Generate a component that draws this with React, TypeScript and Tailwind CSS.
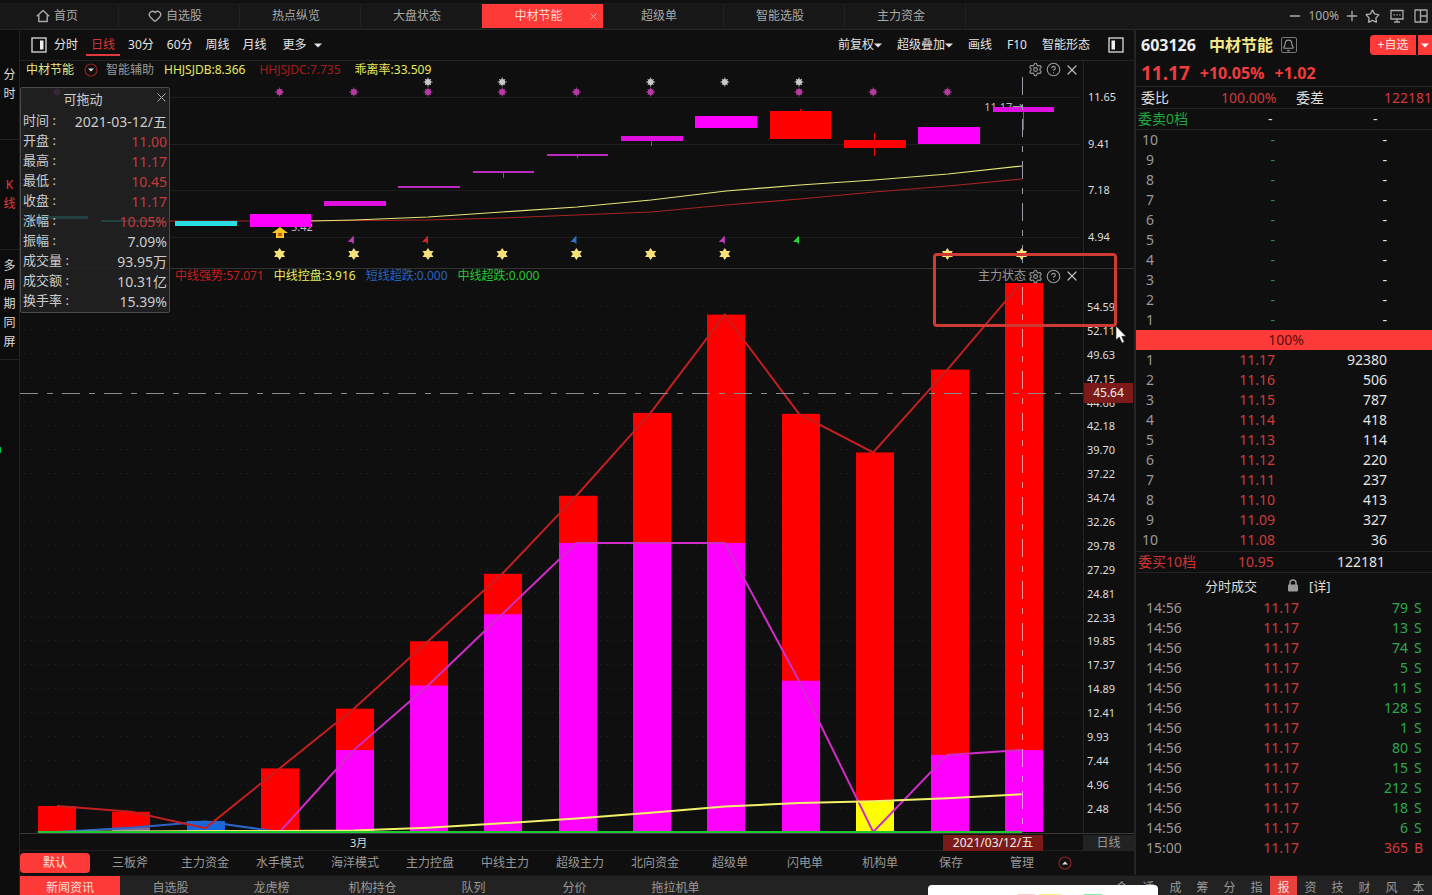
import { Fragment } from 'react'
import type { ReactNode } from 'react'
import { Bell, Heart, HelpCircle, Minus, Plus, Settings, Star, X } from 'lucide-react'
import clsx from 'clsx'

const RED = '#ff0000'
const MAGENTA = '#ff00ff'

const STEP = 74.2
const lineX = (i: number) => 37 + i * STEP
const barX = (i: number) => Math.round(18 + i * 74.38)
const ZERO = 549
const valueY = (v: number) => ZERO - v * 9.634

const strong = [2.7, 2.1, 0.4, 6.6, 12.8, 19.8, 26.8, 34.9, 43.5, 53.7, 43.4, 39.4, 48, 57.07]
const main = [0, 0, 0, 0, 8.5, 15.2, 22.6, 30, 30, 30, 15.7, 0, 8, 8.5]
const control = [0, 0.05, 0.1, 0.1, 0.15, 0.45, 0.9, 1.4, 2, 2.65, 3, 3.2, 3.5, 3.92]
const oversold = [0, 0.45, 1.1, 0]

const axisLabels = [
  '54.59', '52.11', '49.63', '47.15', '44.66', '42.18', '39.70', '37.22', '34.74', '32.26', '29.78',
  '27.29', '24.81', '22.33', '19.85', '17.37', '14.89', '12.41', '9.93', '7.44', '4.96', '2.48',
]

const candles = [
  { x: 20, y: 138, w: 48, h: 3, color: '#2adfe4' },
  { x: 81, y: 142, w: 62, h: 2, color: '#2adfe4' },
  { x: 155, y: 143, w: 62, h: 5, color: '#2adfe4' },
  { x: 230, y: 136, w: 61, h: 13, color: MAGENTA },
  { x: 304, y: 123, w: 62, h: 5, color: '#e010e0' },
  { x: 378, y: 108, w: 62, h: 2, color: '#c02ac0' },
  { x: 453, y: 93, w: 61, h: 2, color: '#c02ac0', wick: [93, 100] },
  { x: 527, y: 76, w: 61, h: 2, color: '#c02ac0', wick: [76, 80] },
  { x: 601, y: 58, w: 62, h: 5, color: '#e010e0', wick: [58, 68] },
  { x: 675, y: 38, w: 62, h: 12, color: MAGENTA },
  { x: 750, y: 33, w: 61, h: 28, color: RED, wick: [31, 61] },
  { x: 824, y: 62, w: 62, h: 8, color: RED, wick: [55, 78] },
  { x: 898, y: 49, w: 62, h: 17, color: MAGENTA },
  { x: 973, y: 29, w: 61, h: 5, color: '#e010e0', wick: [29, 52] },
]

const whiteDots = [5, 6, 8, 9, 10]
const pinkDots = [0, 3, 4, 5, 6, 7, 8, 10, 11, 12]
const goldStars = [3, 4, 5, 6, 7, 8, 9, 12, 13]
const flags = [
  { i: 4, color: '#c23cc2' },
  { i: 5, color: '#d62222' },
  { i: 7, color: '#2f6fd0' },
  { i: 9, color: '#c23cc2' },
  { i: 10, color: '#22d43a' },
]

const quoteRows = [
  { label: '时间', value: '2021-03-12/五' },
  { label: '开盘', value: '11.00', up: true },
  { label: '最高', value: '11.17', up: true },
  { label: '最低', value: '10.45', up: true },
  { label: '收盘', value: '11.17', up: true },
  { label: '涨幅', value: '10.05%', up: true },
  { label: '振幅', value: '7.09%' },
  { label: '成交量', value: '93.95万' },
  { label: '成交额', value: '10.31亿' },
  { label: '换手率', value: '15.39%' },
]

const bids = [
  ['1', '11.17', '92380'],
  ['2', '11.16', '506'],
  ['3', '11.15', '787'],
  ['4', '11.14', '418'],
  ['5', '11.13', '114'],
  ['6', '11.12', '220'],
  ['7', '11.11', '237'],
  ['8', '11.10', '413'],
  ['9', '11.09', '327'],
  ['10', '11.08', '36'],
]
const asks = ['10', '9', '8', '7', '6', '5', '4', '3', '2', '1'].map((n) => [n, '-', '-'])

const ticks = ['79', '13', '74', '5', '11', '128', '1', '80', '15', '212', '18', '6']
  .map((volume) => ({ time: '14:56', volume, side: 'S' }))
  .concat({ time: '15:00', volume: '365', side: 'B' })

const points = (values: number[], start = 0) =>
  values.slice(start).map((v, i) => `${lineX(i + start)},${valueY(v)}`).join(' ')

const Caret = () => (
  <svg width="8" height="5" viewBox="0 0 8 5" className="inline-block">
    <path d="M0 0.5h8L4 4.5z" fill="currentColor" />
  </svg>
)

const CircleCaret = ({ up = false }: { up?: boolean }) => (
  <svg width="14" height="14" viewBox="0 0 14 14" className="shrink-0">
    <circle cx="7" cy="7" r="6" fill="none" stroke="#8e2222" strokeWidth="1.2" />
    <path d={up ? 'M4 8.5h6L7 5.5z' : 'M4 5.5h6L7 8.5z'} fill="#ddd" />
  </svg>
)

const PanelIcon = ({ side }: { side: 'left' | 'right' }) => (
  <svg width="16" height="16" viewBox="0 0 16 16">
    <rect x="1" y="1" width="14" height="14" fill="none" stroke="#ddd" strokeWidth="1.3" />
    <rect x={side === 'right' ? 9 : 3.5} y="3.5" width="3.5" height="9" fill="#eee" />
  </svg>
)

const HomeIcon = () => (
  <svg width="14" height="14" viewBox="0 0 14 14" fill="none" stroke="currentColor" strokeWidth="1.4">
    <path d="M0.800 7.200L7 1.500l6.200 5.700M2.800 6v6.500h8.400V6" strokeLinejoin="round" />
  </svg>
)

const MessageIcon = () => (
  <svg width="14" height="14" viewBox="0 0 14 14" fill="none" stroke="currentColor" strokeWidth="1.3">
    <path d="M1 1.500h12v8.500H1zM7 10v3M4 13h6" />
    <path d="M3.500 5.800h1.400M6.300 5.800h1.400M9.100 5.800h1.400" />
  </svg>
)

const LayoutIcon = () => (
  <svg width="14" height="14" viewBox="0 0 14 14" fill="none" stroke="currentColor" strokeWidth="1.3">
    <path d="M1 1h12v12H1zM6.500 1v12M6.500 7H13" />
  </svg>
)

const LockIcon = () => (
  <svg width="12" height="13" viewBox="0 0 12 13" className="mr-[10px] ml-[30px] shrink-0">
    <path d="M3 6V4a3 3 0 0 1 6 0v2" fill="none" stroke="#999" strokeWidth="1.5" />
    <rect x="1" y="5.500" width="10" height="7" rx="1" fill="#999" />
  </svg>
)

function TopTabs() {
  const tabs: { name: string; icon?: ReactNode }[] = [
    { name: '自选股', icon: <Heart size={14} strokeWidth={2.4} /> },
    { name: '热点纵览' },
    { name: '大盘状态' },
    { name: '中材节能' },
    { name: '超级单' },
    { name: '智能选股' },
    { name: '主力资金' },
  ]
  return (
    <nav className="flex h-[30px] shrink-0 items-center border-t-3 border-b border-t-[#101010] border-b-[#262626] bg-[#171717] text-[12px] text-[#a9a9a9]">
      <button className="flex h-6 w-[119px] items-center justify-center gap-1 border-r border-[#202020] pr-1">
        <HomeIcon />
        首页
      </button>
      {tabs.map((tab) =>
        tab.name === '中材节能' ? (
          <div key={tab.name} className="relative flex h-6 w-[121px] items-center">
            <button className="h-6 w-full bg-[#fd3a37] pr-2 text-[#ffd9d6]">{tab.name}</button>
            <button aria-label="关闭" className="absolute right-1 text-[#ffb9b5]">
              <X size={11} />
            </button>
          </div>
        ) : (
          <button
            key={tab.name}
            className="flex h-6 w-[121px] items-center justify-center gap-1 border-r border-[#202020] pr-2"
          >
            {tab.icon}
            {tab.name}
          </button>
        ),
      )}
      <div className="ml-auto flex items-center gap-[5px] pr-1">
        <button aria-label="缩小"><Minus size={16} /></button>
        <span>100%</span>
        <button aria-label="放大"><Plus size={16} /></button>
        <button aria-label="收藏"><Star size={15} strokeWidth={2.2} /></button>
        <button aria-label="消息" className="ml-[5px]"><MessageIcon /></button>
        <button aria-label="布局" className="ml-[5px]"><LayoutIcon /></button>
      </div>
    </nav>
  )
}

function Sidebar() {
  const groups = ['分时', 'K线', '多周期同屏']
  return (
    <aside className="relative w-5 shrink-0 border-r border-[#242424] bg-[#0c0c0c] text-[12px] leading-[19px]">
      {groups.map((group) => (
        <button
          key={group}
          className={clsx(
            'flex h-[110px] w-full flex-col items-center justify-center border-b border-[#222] pb-0.5',
            group === 'K线' ? 'text-[#e23b3b]' : 'text-[#ddd]',
          )}
        >
          {group.split('').map((c) => (
            <span key={c}>{c}</span>
          ))}
        </button>
      ))}
      <span className="absolute top-[417px] left-0 h-1.5 w-px bg-green-500" />
    </aside>
  )
}

function Toolbar() {
  return (
    <div className="flex h-[30px] shrink-0 items-center pr-[10px] pl-[11px] text-[12px] text-[#e4e4e4]">
      <button aria-label="左侧栏"><PanelIcon side="right" /></button>
      <div className="ml-[7px] flex items-center gap-[13px]">
        <button>分时</button>
        <button className="-mx-[5px] mt-0.5 border-b-2 border-[#e03a3a] px-[5px] text-[#d93636]">日线</button>
        <button>30分</button>
        <button>60分</button>
        <button>周线</button>
        <button>月线</button>
        <button className="ml-[3px] flex items-center gap-[7px]">更多 <Caret /></button>
      </div>
      <div className="ml-auto flex items-center gap-[15px]">
        <button className="flex items-center">前复权<Caret /></button>
        <button className="flex items-center">超级叠加<Caret /></button>
        <button>画线</button>
        <button>F10</button>
        <button>智能形态</button>
        <button aria-label="右侧栏" className="ml-[3px]"><PanelIcon side="left" /></button>
      </div>
    </div>
  )
}

const HeaderIcons = () => (
  <div className="flex items-center gap-[3px] text-[#999]">
    <button aria-label="设置"><Settings size={15} strokeWidth={1.8} /></button>
    <button aria-label="帮助"><HelpCircle size={15} strokeWidth={1.8} /></button>
    <button aria-label="关闭" className="text-[#bbb]"><X size={16} strokeWidth={1.8} /></button>
  </div>
)

const Dot = ({ x, y, color }: { x: number; y: number; color: string }) => (
  <g transform={`translate(${x} ${y})`} stroke={color}>
    <circle r="2.6" fill={color} />
    <path d="M0-4.500V4.500M-4.500 0H4.500M-3-3L3 3M-3 3L3-3" strokeWidth="0.9" />
  </g>
)

function KLinePanel() {
  return (
    <section className="flex h-[208px] shrink-0 border-t border-[#242424]">
      <div className="flex min-w-0 flex-1 flex-col">
        <div className="flex h-[17px] shrink-0 items-center pr-[3px] pl-1.5 text-[12px] leading-[17px] whitespace-nowrap">
          <span className="text-[#e6e68a]">中材节能</span>
          <button aria-label="切换" className="mr-2 ml-[10px]"><CircleCaret /></button>
          <span className="text-[#999]">智能辅助</span>
          <span className="ml-[10px] text-[#e8ea62]">HHJSJDB:8.366</span>
          <span className="ml-[14px] text-[#a81c1c]">HHJSJDC:7.735</span>
          <span className="ml-[14px] text-[#e8ea62]">乖离率:33.509</span>
          <div className="ml-auto"><HeaderIcons /></div>
        </div>
        <div className="relative min-h-0 flex-1 text-[11px] leading-4 text-[#bbb]">
          <span className="absolute top-[11%] left-[90.7%]">11.17→</span>
          <span className="absolute top-[74%] left-[25.5%]">5.42</span>
          <svg
            viewBox="0 0 1063 190"
            preserveAspectRatio="none"
            className="relative block h-full w-full overflow-visible"
          >
            {[19, 66, 112, 159].map((y) => (
              <line key={y} x1="0" x2="1060" y1={y + 0.5} y2={y + 0.5} stroke="#1e1e1e" />
            ))}
            <polyline
              points="81,143 260,143 408,142 482,140 557,137 631,134 706,127 780,121 854,114 928,108 1002,101"
              fill="none"
              stroke="#a82222"
              strokeWidth="1.2"
            />
            <polyline
              points="290,143 334,142 408,139 482,134 557,129 631,122 706,113 780,107 854,102 928,96 1002,88"
              fill="none"
              stroke="#e6e67a"
              strokeWidth="1.2"
            />
            {candles.map((c) => (
              <g key={c.x} fill={c.color}>
                <rect x={c.x} y={c.y} width={c.w} height={c.h} />
                {c.wick && <rect x={c.x + 30} y={c.wick[0]} width="1" height={c.wick[1] - c.wick[0]} />}
              </g>
            ))}
            {whiteDots.map((i) => <Dot key={i} x={lineX(i)} y={4} color="#c8c8c8" />)}
            {pinkDots.map((i) => <Dot key={i} x={lineX(i)} y={14} color="#b83aa4" />)}
            {flags.map(({ i, color }) => (
              <path key={i} d={`M${lineX(i)} 157.500v9l-2-2.500h-4z`} fill={color} />
            ))}
            <path d="M260 149l8 6h-4v5h-8v-5h-4z" fill="#f7c624" />
            <path d="M258 155h4v3h-4z" fill="#cf5a14" />
            <line x1="1002.5" x2="1002.5" y1="-1" y2="190" stroke="#9a9aa6" strokeDasharray="18 9 6 9" />
            {goldStars.map((i) => (
              <path
                key={i}
                transform={`translate(${lineX(i)} 176)`}
                d="M0-6L2-3H5.500L3.600 0L5.500 3H2L0 6L-2 3H-5.500L-3.600 0L-5.500-3H-2Z"
                fill="#f6e07a"
              />
            ))}
          </svg>
        </div>
      </div>
      <div className="flex w-[51px] shrink-0 flex-col justify-between border-l border-[#242424] pt-7 pb-[23px] pl-1 text-[11px] leading-4 text-[#ddd]">
        {['11.65', '9.41', '7.18', '4.94'].map((v) => <span key={v}>{v}</span>)}
      </div>
    </section>
  )
}

function MainForcePanel() {
  return (
    <section className="relative flex min-h-0 flex-1 border-t border-[#333]">
      <div className="flex min-w-0 flex-1 flex-col">
        <div className="flex h-[14px] shrink-0 items-center gap-[10px] pr-[3px] pl-[155px] text-[12px] leading-[14px] whitespace-nowrap">
          <span className="text-[#c81e1e]">中线强势:57.071</span>
          <span className="text-[#e8ea62]">中线控盘:3.916</span>
          <span className="text-[#2b64c0]">短线超跌:0.000</span>
          <span className="text-[#28c832]">中线超跌:0.000</span>
          <div className="z-10 ml-auto flex items-center gap-0.5">
            <span className="text-[#999]">主力状态</span>
            <HeaderIcons />
          </div>
        </div>
        <svg viewBox="0 0 1063 550" preserveAspectRatio="none" className="block min-h-0 w-full flex-1">
          {axisLabels.map((v) => (
            <line
              key={v}
              x1="4"
              x2="1060"
              y1={valueY(Number(v))}
              y2={valueY(Number(v))}
              stroke="#1d1d1d"
              strokeDasharray="2 4"
            />
          ))}
          {strong.map((v, i) => (
            <Fragment key={i}>
              {i !== 2 && <rect x={barX(i)} y={valueY(v)} width="38" height={ZERO - valueY(v)} fill={RED} />}
              <rect x={barX(i)} y={valueY(main[i])} width="38" height={ZERO - valueY(main[i])} fill={MAGENTA} />
            </Fragment>
          ))}
          <rect x={barX(1)} y={valueY(0.45)} width="38" height="4" fill="#7a6a9a" />
          <rect x={barX(2)} y={valueY(1.15)} width="38" height="11" fill="#1467e0" />
          <rect x={barX(11)} y={valueY(3.2)} width="38" height="31" fill="#ffff00" />
          <g fill="none" strokeWidth="2">
            <polyline points={points(oversold)} stroke="#2a66c8" />
            <polyline points={points(strong)} stroke="#c41f1f" />
            <polyline points={points(main, 3)} stroke="#d02cc8" />
            <polyline points={points(control)} stroke="#f2f26a" />
          </g>
          <line x1="18" x2="1002" y1={ZERO} y2={ZERO} stroke="#22c832" strokeWidth="2" />
          <line x1="0" x2="1063" y1="110.5" y2="110.5" stroke="#8a8a92" strokeDasharray="18 9 6 9" />
          <line x1="1002.5" x2="1002.5" y1="4" y2="550" stroke="#fff" strokeOpacity="0.6" strokeDasharray="18 9 6 9" />
        </svg>
      </div>
      <div className="relative flex w-[51px] shrink-0 flex-col justify-between border-l border-[#242424] pt-[30px] pb-4 pl-[3px] text-[11px] leading-4 text-[#ddd]">
        {axisLabels.map((v) => <span key={v}>{v}</span>)}
        <span className="absolute top-[114px] left-0 h-5 w-[49px] bg-[#7c1a1a] text-center text-[12px] leading-5 text-[#eee]">
          45.64
        </span>
      </div>
      <div className="absolute -top-4 right-[17px] z-20 h-[74px] w-[184px] rounded border-3 border-[#cf3a33]" />
      <svg width="12" height="19" viewBox="0 0 12 19" className="absolute top-14 right-[7px] z-20">
        <path d="M1 1v14l3.200-3L7 18l2.300-1L6.700 11.300H11z" fill="#fff" stroke="#222" strokeWidth="0.6" />
      </svg>
    </section>
  )
}

function DateAxis() {
  return (
    <div className="flex h-[18px] shrink-0 items-center border-t border-b border-t-[#3a3a3a] border-b-[#202020] pt-0.5 pl-[330px] text-[12px] leading-4">
      <span className="text-[11px] text-[#ddd]">3月</span>
      <span className="mr-10 ml-auto w-[100px] bg-[#7c1a1a] text-center text-[#eee]">2021/03/12/五</span>
      <span className="w-[51px] bg-[#222] text-center text-[#999]">日线</span>
    </div>
  )
}

function TemplateTabs() {
  const names = [
    '三板斧', '主力资金', '水手模式', '海洋模式', '主力控盘', '中线主力', '超级主力',
    '北向资金', '超级单', '闪电单', '机构单',
  ]
  return (
    <div className="flex h-6 shrink-0 items-center gap-[5px] text-[12px] text-[#999]">
      <button className="h-5 w-[70px] rounded-sm bg-[#fd3a37] text-[#ffe1de]">默认</button>
      {names.map((name) => (
        <button key={name} className="h-5 w-[70px]">{name}</button>
      ))}
      <button className="h-5 w-[62px]">保存</button>
      <button className="h-5 w-[70px]">管理</button>
      <button aria-label="展开" className="-ml-1"><CircleCaret up /></button>
    </div>
  )
}

function DataCard() {
  return (
    <div className="absolute top-[57px] left-0 z-10 w-[150px] rounded-xs border border-[#4a4a4a] bg-[#222]/85 pb-px text-[13px] text-[#ccc]">
      <div className="flex h-[23px] items-center justify-center pr-6">可拖动</div>
      <button aria-label="关闭" className="absolute top-0.5 right-0 text-[#aaa]">
        <X size={15} strokeWidth={1.6} />
      </button>
      <dl>
        {quoteRows.map((row) => (
          <div key={row.label} className="flex h-5 items-center justify-between pr-0.5 pl-0.5">
            <dt>{row.label}&nbsp;:</dt>
            <dd className={clsx('text-[14px]', row.up && 'text-[#c8383a]')}>{row.value}</dd>
          </div>
        ))}
      </dl>
    </div>
  )
}

function DepthTable({ rows, label, priceClass }: { rows: string[][]; label: string; priceClass: string }) {
  return (
    <table aria-label={label} className="w-full table-fixed text-[14px] leading-5">
      <tbody>
        {rows.map(([level, price, volume]) => (
          <tr key={level} className="h-5">
            <td className="w-[28px] text-center text-[#999]">{level}</td>
            <td className={clsx('w-[111px] text-right', priceClass)}>{price}</td>
            <td className="w-[112px] text-right text-[#e4e4e4]">{volume}</td>
            <td />
          </tr>
        ))}
      </tbody>
    </table>
  )
}

function QuotePanel() {
  return (
    <aside className="w-[298px] shrink-0 overflow-hidden border-l-2 border-[#242424] text-[14px] leading-5">
      <div className="flex h-[30px] items-center pl-[5px] text-[16px] font-bold">
        <span className="text-[#eee]">603126</span>
        <span className="ml-[13px] text-[#f2e88a]">中材节能</span>
        <button aria-label="提醒" className="ml-2 flex size-4 items-center justify-center rounded-xs border border-[#777] text-[#999]">
          <Bell size={13} />
        </button>
        <button className="ml-auto h-5 w-[46px] rounded-l-sm bg-[#fd3a37] text-[12px] font-normal text-[#ffe1de]">
          +自选
        </button>
        <button aria-label="更多分组" className="ml-0.5 flex h-5 w-[14px] items-center justify-center bg-[#fd3a37] text-white">
          <Caret />
        </button>
      </div>
      <div className="flex h-[27px] items-center border-b border-[#2a2a2a] pl-[5px] text-[16px] font-bold text-[#f03c3c]">
        <span className="text-[19px]">11.17</span>
        <span className="ml-[10px]">+10.05%</span>
        <span className="ml-[10px]">+1.02</span>
      </div>
      <div className="flex h-[22px] items-center border-b border-[#222] pl-[5px]">
        <span className="w-[80px] text-[#ddd]">委比</span>
        <span className="text-[#cf3b3b]">100.00%</span>
        <span className="ml-auto text-[#ddd]">委差</span>
        <span className="ml-[60px] text-[#cf3b3b]">122181</span>
      </div>
      <div className="flex h-[21px] items-center border-b border-[#222] pl-0.5">
        <span className="w-[130px] text-[#1fa83c]">委卖0档</span>
        <span className="w-[105px] text-[#ddd]">-</span>
        <span className="text-[#ddd]">-</span>
      </div>
      <DepthTable rows={asks} label="卖盘" priceClass="text-[#2c8a4a]" />
      <div className="h-5 bg-[#fd3a37] pl-1 text-center text-[#5a0f0f]">100%</div>
      <DepthTable rows={bids} label="买盘" priceClass="text-[#cf3b3b]" />
      <div className="mt-px flex h-[22px] items-center border-t border-b border-[#222] pl-0.5">
        <span className="w-[100px] text-[#d23434]">委买10档</span>
        <span className="w-[99px] text-[#cf3b3b]">10.95</span>
        <span className="text-[#e4e4e4]">122181</span>
      </div>
      <div className="flex h-[25px] items-center pl-[69px] text-[13px] text-[#ddd]">
        <span>分时成交</span>
        <LockIcon />
        <a href="#detail">[详]</a>
      </div>
      <table aria-label="分时成交" className="w-full table-fixed leading-5">
        <tbody>
          {ticks.map((t, i) => (
            <tr key={i} className="h-5">
              <td className="w-[63px] pl-[10px] text-[#999]">{t.time}</td>
              <td className="w-[100px] text-right text-[#cf3b3b]">11.17</td>
              <td className={clsx('w-[109px] text-right', t.side === 'S' ? 'text-[#2fa850]' : 'text-[#cf3b3b]')}>
                {t.volume}
              </td>
              <td className={clsx('pl-1.5', t.side === 'S' ? 'text-[#2fa850]' : 'text-[#cf3b3b]')}>{t.side}</td>
            </tr>
          ))}
        </tbody>
      </table>
    </aside>
  )
}

function BottomBar() {
  const left = ['自选股', '龙虎榜', '机构持仓', '队列', '分价', '拖拉机单']
  const right = ['合', '适', '成', '筹', '分', '指', '报', '资', '技', '财', '风', '本']
  return (
    <footer className="relative flex h-5 shrink-0 overflow-hidden border-t border-[#161616] bg-[#222] text-[12px] leading-4 text-[#999]">
      <button className="flex w-[100px] items-start justify-center bg-[#fd3a37] pt-1 text-[#ffe1de]">新闻资讯</button>
      {left.map((name) => (
        <button key={name} className="flex w-[101px] items-start justify-center pt-1">{name}</button>
      ))}
      <div className="ml-auto flex">
        {right.map((name) => (
          <button
            key={name}
            className={clsx('flex w-[27px] items-start justify-center pt-1', name === '报' && 'bg-[#e8403c] text-[#ffd9d6]')}
          >
            {name}
          </button>
        ))}
      </div>
      <div className="absolute right-[274px] bottom-0 flex h-[10px] w-[230px] items-end rounded-t bg-white pl-[90px]">
        <span className="h-px w-[17px] bg-red-200" />
        <span className="ml-1 h-px w-[22px] bg-yellow-200" />
        <span className="ml-[23px] h-px w-[18px] bg-green-300" />
      </div>
    </footer>
  )
}

export default function App() {
  return (
    <div className="flex h-screen flex-col overflow-hidden bg-[#0f0f0f] font-['Noto_Sans','Noto_Sans_CJK_SC',sans-serif]">
      <TopTabs />
      <div className="flex min-h-0 flex-1">
        <Sidebar />
        <div className="flex min-w-0 flex-1 flex-col">
          <div className="flex min-h-0 flex-1">
            <main className="relative flex min-w-0 flex-1 flex-col">
              <Toolbar />
              <KLinePanel />
              <MainForcePanel />
              <DateAxis />
              <TemplateTabs />
              <DataCard />
            </main>
            <QuotePanel />
          </div>
          <BottomBar />
        </div>
      </div>
    </div>
  )
}
